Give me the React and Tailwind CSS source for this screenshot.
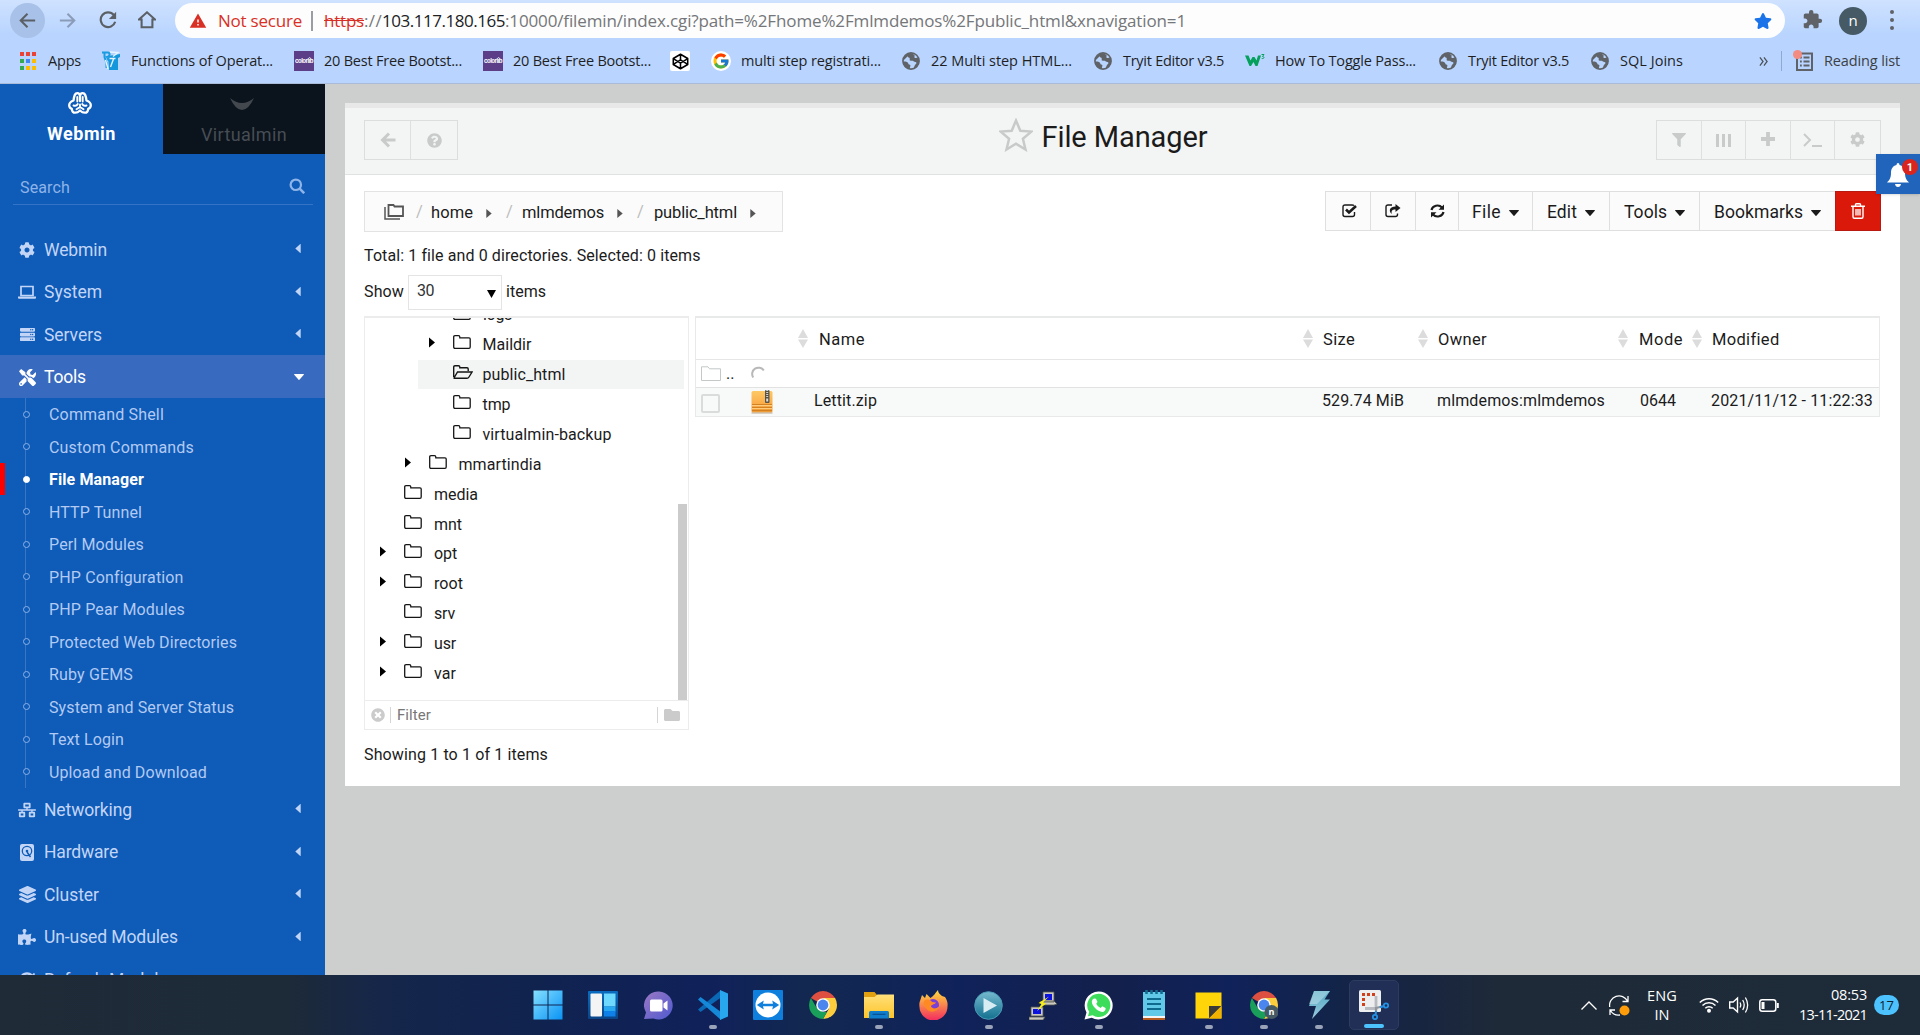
import React, { useLayoutEffect, useRef } from "react";
import {
  FaCog, FaServer, FaTools, FaNetworkWired, FaLayerGroup, FaPuzzlePiece,
  FaFilter, FaSyncAlt, FaQuestionCircle, FaTimesCircle,
  FaFolder, FaStar,
} from "react-icons/fa";
import { MdExtension, MdWarning } from "react-icons/md";
import { FcGoogle } from "react-icons/fc";

/* Text that is tracked so that it fills exactly `w` pixels. */
function Fit({ w, className = "", inner = "", children }) {
  const ref = useRef(null);
  useLayoutEffect(() => {
    const el = ref.current;
    el.style.letterSpacing = "0px";
    const natural = el.getBoundingClientRect().width;
    const n = el.textContent.length;
    el.style.letterSpacing = `${(w - natural) / n}px`;
  }, [w]);
  return (
    <span className={`block shrink-0 whitespace-pre ${className}`} style={{ width: w }}>
      <span ref={ref} className={`inline-block ${inner}`}>{children}</span>
    </span>
  );
}

const Svg = ({ className = "", vb = "0 0 20 20", children }) => (
  <svg viewBox={vb} className={`block shrink-0 ${className}`} fill="none">{children}</svg>
);

const CaretR = ({ className = "" }) => (
  <Svg vb="0 0 6 10" className={className}><path d="M0 0l6 5-6 5z" fill="currentColor" /></Svg>
);
const CaretL = ({ className = "" }) => (
  <Svg vb="0 0 6 10" className={className}><path d="M5.500 0Q6 0 6 .6v8.800q0 .6-.5.6L.3 5.400Q0 5 .3 4.600z" fill="currentColor" /></Svg>
);
const CaretD = ({ className = "" }) => (
  <Svg vb="0 0 10 6" className={className}><path d="M0 .5Q0 0 .6 0h8.800q.6 0 .6.5L5.400 5.700q-.4.4-.8 0z" fill="currentColor" /></Svg>
);

/* ---------- browser ---------- */
const Colorlib = () => (
  <div className="flex h-5 w-5 items-center justify-center overflow-hidden bg-[#5b3e87]">
    <span className="font-['Inter'] text-[6px] font-bold leading-none tracking-[-0.5px] text-white">colorlib</span>
  </div>
);
const GlobeIcon = () => (
  <Svg className="h-[18px] w-[18px]" vb="0 0 20 20">
    <circle cx="10" cy="10" r="9" fill="#b9d5ff" stroke="#5f6368" strokeWidth="1.800" />
    <path d="M10 1a9 9 0 0 0-9 9.500c2 .3 3.500-.2 5 .8s.5 2.200 2 2.500c1.200.2 1.600.9 1.200 1.900L8.500 19C4 18.500 1 15 1 10zM10 1c-2 1.300-3.800 2.300-3.600 4 .2 1.300 1.900.9 2.200 2.200.3 1-.7 1.700.4 2.300 1.400.7 2.600-.2 3.800.7 1.300 1 3 .3 3.200 1.800.2 1.700-1.800 1.900-2 3.300L12.500 19c3.800-1 6.500-4.500 6.500-9 0-1.500-.4-3-1-4.200-1.200.4-2.600 1.400-3.800.6-1.300-.9.600-2-.4-3.200-.7-.9-2.500-1.400-3.800-2.200z" fill="#5f6368" />
  </Svg>
);
const AppsIcon = () => {
  const c = ["#ea4335", "#ea4335", "#ea4335", "#34a853", "#4285f4", "#fbbc04", "#34a853", "#fbbc04", "#fbbc04"];
  return (
    <div className="grid w-4 grid-cols-3 gap-x-[2px] gap-y-[3px]">
      {c.map((k, i) => <i key={i} className="block h-1 w-1" style={{ backgroundColor: k }} />)}
    </div>
  );
};
const RtIcon = () => (
  <Svg className="h-5 w-5" vb="0 0 20 20">
    <path d="M7 5l12-2v3l-2 1v12H8z" fill="#1497db" />
    <path d="M1 1.500h6c2 0 2.500 4-1 4.500l2 4M3.500 2v4l2 6v5" stroke="#1b9be0" strokeWidth="2" />
    <path d="M8.500 7.500h6M12.500 8l-3 8M4.500 9l2.500 9M9 1l8 .5-5 4" stroke="#e6f4ff" strokeWidth="1.400" />
  </Svg>
);
const CodepenIcon = () => (
  <div className="flex h-5 w-5 items-center justify-center rounded-[2px] bg-white">
    <Svg className="h-[17px] w-[17px]" vb="0 0 20 20">
      <path d="M10 1.500L18.500 6.500v7L10 18.500l-8.500-5v-7zM1.500 6.500L10 12l8.500-5.500M1.500 13.500L10 8l8.500 5.500M10 1.500V8M10 12v6.500" stroke="#000" strokeWidth="1.800" strokeLinejoin="round" />
    </Svg>
  </div>
);
const GIcon = () => (
  <div className="flex h-5 w-5 items-center justify-center rounded-full bg-white"><FcGoogle size={18} /></div>
);
const W3Icon = () => (
  <Svg className="h-5 w-5" vb="0 0 20 20">
    <path d="M0 4.500h3.500l2 5 2-3.500h2l2 3.500 1.500-5h3L12.500 15h-2L8.500 11l-2.500 4H4.500z" fill="#04a05c" />
    <path d="M16.500 3.500h2.500L17.500 5.500c2.200 0 2 2.400-.8 2" stroke="#04a05c" strokeWidth="1" />
  </Svg>
);

const bookmarks = [
  [AppsIcon, "Apps", "ml-5 w-4", "ml-3", 33],
  [RtIcon, "Functions of Operat...", "ml-5 w-5", "ml-[10px]", 142],
  [Colorlib, "20 Best Free Bootst...", "ml-[21px] w-5", "ml-[10px]", 138],
  [Colorlib, "20 Best Free Bootst...", "ml-[21px] w-5", "ml-[10px]", 138],
  [CodepenIcon, null, "ml-[19px] w-5", "", 0],
  [GIcon, "multi step registrati...", "ml-[21px] w-5", "ml-[10px]", 140],
  [GlobeIcon, "22 Multi step HTML...", "ml-[21px] w-[18px]", "ml-[11px]", 141],
  [GlobeIcon, "Tryit Editor v3.5", "ml-[22px] w-[18px]", "ml-[11px]", 101],
  [W3Icon, "How To Toggle Pass...", "ml-[21px] w-5", "ml-[10px]", 141],
  [GlobeIcon, "Tryit Editor v3.5", "ml-[23px] w-[18px]", "ml-[11px]", 101],
  [GlobeIcon, "SQL Joins", "ml-[22px] w-[18px]", "ml-[11px]", 63],
];

function Browser() {
  return (
    <header className="h-[84px] shrink-0 border-b border-[#a9bbd8] bg-gradient-to-b from-[#cfe2ff] from-0% to-[#b9d5ff] to-40% font-['Open_Sans',sans-serif] text-[#1f1f1f]">
      <div className="flex h-[38px] items-end">
        <div className="ml-[10px] flex h-[35px] w-[35px] items-center justify-center rounded-full bg-[#a8c1e8]">
          <Svg className="h-[17px] w-[17px]"><path d="M19 10H2M10 2l-8 8 8 8" stroke="#5b6066" strokeWidth="2.400" /></Svg>
        </div>
        <Svg className="mb-[9px] ml-[14px] h-[17px] w-[17px]"><path d="M1 10h17M10 2l8 8-8 8" stroke="#8b9cb8" strokeWidth="2.400" /></Svg>
        <Svg className="mb-[9px] ml-[23px] h-[18px] w-[18px]">
          <path d="M16.500 4.500A8.200 8.200 0 1 0 18 12" stroke="#5b6066" strokeWidth="2.400" />
          <path d="M19 .8v8h-8z" fill="#5b6066" />
        </Svg>
        <Svg className="mb-[9px] ml-[21px] h-[18px] w-[18px]"><path d="M1 9.500L10 1.500l9 8h-3V18H4V9.500z" stroke="#5b6066" strokeWidth="2.300" /></Svg>
        <div className="ml-[19px] flex h-[35px] w-[1610px] items-center rounded-full bg-[#fdfdfd] text-[17px] leading-none text-[#747679]">
          <MdWarning className="ml-[14px] text-[#d93025]" size={18} />
          <Fit w={84} className="ml-[11px] text-[#d93025]">Not secure</Fit>
          <div className="ml-[9px] h-5 w-[2px] bg-[#9a9da1]" />
          <Fit w={40} className="ml-[11px] text-[#d93025]" inner="line-through">https</Fit>
          <Fit w={18} className="">://</Fit>
          <Fit w={123} className="text-[#202124]">103.117.180.165</Fit>
          <Fit w={681}>:10000/filemin/index.cgi?path=%2Fhome%2Fmlmdemos%2Fpublic_html&xnavigation=1</Fit>
          <FaStar className="ml-auto mr-[13px] text-[#1a73e8]" size={18} />
        </div>
        <MdExtension className="mb-[8px] ml-[17px] text-[#5f6368]" size={21} />
        <div className="mb-[3px] ml-[16px] flex h-7 w-7 items-center justify-center rounded-full bg-[#455a64] pb-[2px] text-[15px] text-white">n</div>
        <div className="mb-[8px] ml-[23px] flex flex-col gap-1">
          <i className="block h-1 w-1 rounded-full bg-[#5f6368]" /><i className="block h-1 w-1 rounded-full bg-[#5f6368]" /><i className="block h-1 w-1 rounded-full bg-[#5f6368]" />
        </div>
      </div>
      <div className="flex h-[45px] items-center pt-[1px] text-[14.500px] leading-none">
        {bookmarks.map(([Icon, label, ic, tc, w], i) => (
          <div key={i} className="flex shrink-0 items-center">
            <div className={`shrink-0 ${ic}`}><Icon /></div>
            {label && <Fit w={w} className={tc}>{label}</Fit>}
          </div>
        ))}
        <Svg className="ml-[76px] h-[9px] w-[9px]"><path d="M2 1l7 9-7 9M11 1l7 9-7 9" stroke="#4c5157" strokeWidth="2.800" /></Svg>
        <div className="ml-[13px] h-5 w-px bg-[#8fa9d2]" />
        <Svg className="ml-[11px] h-[22px] w-[21px]" vb="0 0 21 22">
          <path d="M4 3.500h15V20H4z" stroke="#5f6368" strokeWidth="2" />
          <path d="M7 7.500h1.800M7 11.500h1.800M7 15.500h1.800M10.500 7.500H16.500M10.500 11.500h6M10.500 15.500h6" stroke="#5f6368" strokeWidth="1.800" />
          <circle cx="4.500" cy="4.500" r="4.500" fill="#f28b82" />
        </Svg>
        <Fit w={76} className="ml-[10px] text-[#3c4043]">Reading list</Fit>
      </div>
    </header>
  );
}

/* ---------- sidebar ---------- */
const WebminLogo = () => (
  <Svg className="h-[22px] w-[24px]" vb="0 0 24 22">
    <path d="M12 9V4.500C12 2 10.800 1.200 9.300 1.200 7 1.200 6.300 3 5.500 8.500 2.800 9.500 1.200 11 1.200 13.300c0 1.800 1 3 2.600 3.500.2 2.600 1.500 3.900 3.500 3.900 1.800 0 3.200-.8 4.700-2.200 1.500 1.400 2.900 2.200 4.700 2.200 2 0 3.300-1.300 3.500-3.900 1.600-.5 2.600-1.700 2.600-3.500 0-2.300-1.600-3.800-4.300-4.800C17.700 3 17 1.200 14.700 1.200 13.200 1.200 12 2 12 4.500" stroke="#fff" strokeWidth="2.300" strokeLinecap="round" strokeLinejoin="round" />
    <path d="M9.300 5v4.500M14.700 5v4.500M5.500 13.500c2 .6 3.500 0 4.300-1.500M18.500 13.500c-2 .6-3.500 0-4.300-1.500M12 12.500V15M8.500 17.300L12 15l3.500 2.300" stroke="#fff" strokeWidth="1.900" strokeLinecap="round" strokeLinejoin="round" />
  </Svg>
);
const Laptop = () => (
  <Svg className="h-[14px] w-[18px]" vb="0 0 18 14"><path d="M3 1.500h12v9H3z" stroke="currentColor" strokeWidth="1.700" /><path d="M0 11.500h18V13q0 .8-1 .8H1q-1 0-1-.8z" fill="currentColor" /></Svg>
);
const Disk = () => (
  <Svg className="h-[17px] w-[14px]" vb="0 0 14 17"><rect width="14" height="17" rx="2" fill="currentColor" /><circle cx="7" cy="7" r="4.700" stroke="#0e5bb8" strokeWidth="1.300" /><circle cx="7" cy="7" r="1.300" fill="#0e5bb8" /><path d="M7 8l3.500 5M2.500 14h.1" stroke="#0e5bb8" strokeWidth="1.500" /></Svg>
);
const Refresh = () => <FaSyncAlt size={16} />;
const top = [[FaCog, "Webmin", 63, 16], [Laptop, "System", 58, 17], [FaServer, "Servers", 58, 15]];
const bottom = [[FaNetworkWired, "Networking", 88, 18], [Disk, "Hardware", 74, 16], [FaLayerGroup, "Cluster", 55, 17], [FaPuzzlePiece, "Un-used Modules", 134, 18], [Refresh, "Refresh Modules", 133, 16]];
const subs = [
  ["Command Shell", 115], ["Custom Commands", 145], ["File Manager", 95], ["HTTP Tunnel", 93], ["Perl Modules", 95],
  ["PHP Configuration", 134], ["PHP Pear Modules", 136], ["Protected Web Directories", 188], ["Ruby GEMS", 84],
  ["System and Server Status", 185], ["Text Login", 75], ["Upload and Download", 158],
];
const MenuItem = ({ icon: Icon, label, w, size, open, last }) => (
  <div className={`flex h-[42.500px] shrink-0 items-center text-[17.500px] leading-none ${open ? "bg-[#386bbf] text-white" : "text-[#c3d5f6]"}`}>
    <div className="ml-[17px] flex w-5 justify-center pt-[2px]"><Icon size={size} /></div>
    <Fit w={w} className="ml-[7px] pt-[3px]">{label}</Fit>
    {open ? <CaretD className="ml-auto mr-[21px] mt-px h-[6px] w-[10px]" /> : last ? null : <CaretL className="ml-auto mr-[24px] h-[9px] w-[6px]" />}
  </div>
);

function Sidebar() {
  return (
    <aside className="flex w-[325px] shrink-0 flex-col overflow-hidden bg-[#0e5bb8] font-['Roboto',sans-serif]">
      <div className="flex h-[70px] shrink-0 leading-none">
        <div className="flex w-[163px] flex-col items-center pt-2 text-[18px] font-bold text-white">
          <div className="-ml-1"><WebminLogo /></div>
          <Fit w={69} className="mt-[11px]">Webmin</Fit>
        </div>
        <div className="flex w-[162px] flex-col items-center bg-[#0b131c] pt-[14px] text-[18px] text-[#474d54]">
          <Svg className="-ml-1 h-[12px] w-6" vb="0 0 24 12"><path d="M0 0q6 5 12 5T24 0q-5.500 12-12 12T0 0z" fill="#43484f" /></Svg>
          <Fit w={86} className="mt-[16px]">Virtualmin</Fit>
        </div>
      </div>
      <div className="ml-[13px] mr-[12px] flex h-[51px] shrink-0 items-end border-b border-[#3473c5] pb-[8px] text-[16px] leading-none text-[#8eb4e8]">
        <Fit w={50} className="ml-[7px]">Search</Fit>
        <Svg className="mb-[2px] ml-auto mr-[8px] h-4 w-4"><circle cx="8.500" cy="8.500" r="6.500" stroke="currentColor" strokeWidth="2.800" /><path d="M13 13l6 6" stroke="currentColor" strokeWidth="3.200" /></Svg>
      </div>
      <div className="h-[22.500px] shrink-0" />
      {top.map(([icon, label, w, size]) => <MenuItem key={label} icon={icon} label={label} w={w} size={size} />)}
      <MenuItem icon={FaTools} label="Tools" w={42} size={17} open />
      <div className="flex shrink-0 flex-col bg-[linear-gradient(#3b76c6,#3b76c6)] bg-[length:1px_100%] bg-[position:25px_0] bg-no-repeat">
        {subs.map(([label, w]) => {
          const on = label === "File Manager";
          return (
            <div key={label} className={`flex h-[32.500px] items-center text-[16px] leading-none ${on ? "text-white" : "text-[#b3caf2]"}`}>
              <div className={`h-8 w-[5px] ${on ? "bg-[#ff0000]" : ""}`} />
              <div className={`ml-[17.500px] mt-px h-[7px] w-[7px] rounded-full border ${on ? "border-white bg-white" : "border-[#8fb2e6] bg-[#0e5bb8]"}`} />
              <Fit w={w} className={`ml-[19.500px] pt-[3px] ${on ? "font-bold" : ""}`}>{label}</Fit>
            </div>
          );
        })}
      </div>
      {bottom.map(([icon, label, w, size]) => <MenuItem key={label} icon={icon} label={label} w={w} size={size} last={label.startsWith("Refresh")} />)}
    </aside>
  );
}

/* ---------- file manager ---------- */
const FolderIcon = ({ className = "" }) => (
  <Svg className={`h-[14px] w-[18px] ${className}`} vb="0 0 18 14"><path d="M.7 12V2Q.7.7 2 .7h3.500Q6.800.7 6.800 2v.8H16q1.200 0 1.200 1.200v8q0 1.300-1.200 1.300H2Q.7 13.300.7 12z" stroke="currentColor" strokeWidth="1.300" /></Svg>
);
const FolderOpen = () => (
  <Svg className="h-[14px] w-[20px]" vb="0 0 20 14"><path d="M.7 12V2Q.7.7 2 .7h3.500Q6.800.7 6.800 2v.8H14q1.200 0 1.200 1.200v2M1 13l3.500-6H19l-3 5q-.8 1.300-2 1.300H1.500z" stroke="currentColor" strokeWidth="1.400" /></Svg>
);
const tree = [
  ["Maildir", "pl-[61px]", true, 49], ["public_html", "pl-[61px]", false, 83], ["tmp", "pl-[61px]", false, 28], ["virtualmin-backup", "pl-[61px]", false, 129],
  ["mmartindia", "pl-[37px]", true, 83], ["media", "pl-[12.500px]", false, 44], ["mnt", "pl-[12.500px]", false, 28], ["opt", "pl-[12.500px]", true, 23],
  ["root", "pl-[12.500px]", true, 29], ["srv", "pl-[12.500px]", false, 21], ["usr", "pl-[12.500px]", true, 22], ["var", "pl-[12.500px]", true, 22],
];
const Sort = () => (
  <Svg className="h-[19px] w-[10px]" vb="0 0 10 19"><path d="M5 0l5 9H0zM5 19l5-8.500H0z" fill="#dcdcdc" /></Svg>
);
const CheckBoxIcon = () => (
  <Svg className="h-[14px] w-[16px]" vb="0 0 16 14"><path d="M12 1.700Q11.500 1 10 1H3Q1 1 1 3v7.500q0 2 2 2h7.500q2 0 2-2V8" stroke="currentColor" strokeWidth="1.400" /><path d="M4 5.500l3 3 7-6.500" stroke="currentColor" strokeWidth="2.600" /></Svg>
);
const ShareIcon = () => (
  <Svg className="h-[14px] w-[16px]" vb="0 0 16 14"><path d="M7 1H3Q1 1 1 3v7.500q0 2 2 2h7.500q2 0 2-2V9.500" stroke="currentColor" strokeWidth="1.400" /><path d="M10.500 0L15.500 4l-5 4V5.500C7.500 5.400 6 6.500 6.800 10 3 6.500 5 2.600 10.500 2.400z" fill="currentColor" /></Svg>
);
const SyncIcon = () => (
  <Svg className="h-[14px] w-[15px]" vb="0 0 15 14"><path d="M1.500 6a6 5.500 0 0 1 10.500-2.500M13.500 8A6 5.500 0 0 1 3 10.500" stroke="currentColor" strokeWidth="2.200" /><path d="M14 .5v5.300H8.500zM1 13.500V8.200h5.500z" fill="currentColor" /></Svg>
);
const TrashIcon = () => (
  <Svg className="h-[16px] w-[14px]" vb="0 0 14 16"><path d="M0 3.300h14M4.500 3V1.500q0-.8.8-.8h3.400q.8 0 .8.800V3M2 3.500v10.200q0 1.500 1.300 1.500h7.400q1.300 0 1.300-1.500V3.500M5 6v6.500M7 6v6.500M9 6v6.500" stroke="#fff" strokeWidth="1.400" /></Svg>
);
const ZipIcon = () => (
  <Svg className="h-[24px] w-[22px]" vb="0 0 22 24">
    <defs><linearGradient id="zip" x1="0" y1="0" x2="0" y2="1"><stop offset="0" stopColor="#fdc965" /><stop offset=".6" stopColor="#fbac48" /><stop offset="1" stopColor="#ec9a35" /></linearGradient></defs>
    <rect x=".5" y="1" width="21" height="21.500" rx="1.500" fill="url(#zip)" />
    <path d="M1 14.500h20M1 17.500h20M1 20.500h20" stroke="#cf7d20" strokeWidth=".9" />
    <path d="M1 15.500h20M1 18.500h20" stroke="#ffd58b" strokeWidth=".8" />
    <rect x="14" y="0" width="4.500" height="13" rx="1" fill="#55534e" />
    <path d="M16.200 0v8" stroke="#d4d4d4" strokeWidth="2" strokeDasharray="1 1" /><rect x="15.200" y="8.500" width="2" height="3" fill="#ddd" />
    <rect x=".5" y="22.500" width="21" height="1" fill="#b9a78d" />
  </Svg>
);
const cellBtn = "flex h-full items-center justify-center border-l border-[#dedfdf] first:border-l-0";

function Tree() {
  return (
    <div className="w-[325px] shrink-0 border border-t-2 border-[#ececec]">
      <div className="flex h-[383px] flex-col overflow-hidden border-b border-[#ececec]">
        <div className="flex items-start">
          <div className="-mr-[6px] flex-1">
            <div className="flex h-[11px] items-end overflow-hidden pl-[88px]">
              <FolderIcon className="mb-[9px]" />
              <Fit w={29} className="ml-[12px] mb-[6px] text-[16px] leading-none">logs</Fit>
            </div>
            {tree.map(([name, pad, arrow, w]) => {
              const sel = name === "public_html";
              return (
                <div key={name} className={`flex h-[29.860px] items-center ${pad} ${sel ? "bg-[linear-gradient(#f3f5f5,#f3f5f5)] bg-[length:100%_29px] bg-[position:53px_1px] bg-no-repeat" : ""}`}>
                  <div className="w-[26.500px] pb-[2px] pl-[2.500px]">{arrow && <CaretR className="h-[11px] w-[6px] text-black" />}</div>
                  <div className="w-5 pb-[3px] text-[#151515]">{sel ? <FolderOpen /> : <FolderIcon />}</div>
                  <Fit w={w} className="ml-[10px] pt-[3px] text-[16px] leading-none">{name}</Fit>
                </div>
              );
            })}
          </div>
          <div className="mr-[1px] mt-[186px] h-[196px] w-[9px] bg-[#cbcbcb]" />
        </div>
      </div>
      <div className="flex h-[27.500px] items-center text-[15px] leading-none text-[#777]">
        <FaTimesCircle className="ml-[6px] text-[#cbcbcb]" size={14} />
        <div className="ml-[5px] h-4 w-px bg-[#d5d5d5]" />
        <Fit w={34} className="ml-[6px] pt-[2px]">Filter</Fit>
        <div className="ml-auto h-4 w-px bg-[#d5d5d5]" />
        <FaFolder className="ml-[6px] mr-[8px] text-[#cbcbcb]" size={16} />
      </div>
    </div>
  );
}

function FileTable() {
  return (
    <div className="h-[101px] w-[1185px] border border-t-2 border-[#e8eaea] text-[16px] leading-none">
      <div className="flex h-[42px] items-center border-b border-[#e6e6e6] text-[16.500px]">
        <div className="ml-[102px]"><Sort /></div><Fit w={46} className="ml-[11px] pt-[3px]">Name</Fit>
        <div className="ml-[438px]"><Sort /></div><Fit w={32} className="ml-[10px] pt-[3px]">Size</Fit>
        <div className="ml-[63px]"><Sort /></div><Fit w={49} className="ml-[10px] pt-[3px]">Owner</Fit>
        <div className="ml-[131px]"><Sort /></div><Fit w={44} className="ml-[11px] pt-[3px]">Mode</Fit>
        <div className="ml-[9px]"><Sort /></div><Fit w={67} className="ml-[10px] pt-[3px]">Modified</Fit>
      </div>
      <div className="flex h-[28px] items-center border-b border-[#e2e2e2]">
        <Svg className="ml-[5px] h-[15px] w-[20px]" vb="0 0 20 15"><path d="M.5 14.500V.8H7l1.500 2H19.500v11.700z" stroke="#c4c8c8" /></Svg>
        <span className="ml-[5px] w-[24px]">..</span>
        <Svg className="mb-[3px] h-[14px] w-[15px]" vb="0 0 15 14"><path d="M3.200 12.500A6.300 6.300 0 0 1 13.800 5.500" stroke="#b8b8b8" strokeWidth="2" /></Svg>
      </div>
      <div className="flex h-[28px] items-center bg-[#f8fafa]">
        <div className="ml-[5px] mt-[2px] h-[19px] w-[19px] rounded-[2px] border-2 border-[#dadcdc]" />
        <div className="ml-[31px] mb-px"><ZipIcon /></div>
        <Fit w={63} className="ml-[41px] pb-[3px]">Lettit.zip</Fit>
        <Fit w={82} className="ml-[445px] pb-[3px]">529.74 MiB</Fit>
        <Fit w={168} className="ml-[33px] pb-[3px]">mlmdemos:mlmdemos</Fit>
        <Fit w={36} className="ml-[35px] pb-[3px]">0644</Fit>
        <Fit w={162} className="ml-[35px] pb-[3px]">2021/11/12 - 11:22:33</Fit>
      </div>
    </div>
  );
}

const Menu = ({ label, w, box }) => (
  <div className={`${cellBtn} ${box} gap-2 text-[17.500px]`}><Fit w={w} className="pt-[3px]">{label}</Fit><CaretD className="mt-[3px] h-[6px] w-[10px]" /></div>
);

function Main() {
  return (
    <main className="relative flex-1 bg-[#cdcfce] pl-5 pt-[19px] font-['Roboto',sans-serif] leading-none text-[#1b1b1b]">
      <section className="h-[683px] w-[1555px] border-t-[5px] border-[#e8e8e8] bg-white">
        <div className="flex h-[67px] items-start justify-between border-b border-[#e0e2e2] bg-[#f3f5f5] pl-[19px] pr-[19px] pt-3">
          <div className="flex h-10 w-[94px] border border-[#dcdede] text-[#c9cbcb]">
            <div className={`${cellBtn} w-[45px]`}><Svg className="h-[16px] w-[16px]" vb="0 0 16 16"><path d="M15.500 8H3M9 1.500L2.500 8 9 14.500" stroke="currentColor" strokeWidth="3" /></Svg></div>
            <div className={`${cellBtn} w-[47px]`}><FaQuestionCircle size={15} /></div>
          </div>
          <div className="ml-[92px] flex items-center gap-[9px]">
            <Svg className="-mt-[3px] h-[34px] w-[34px]" vb="0 0 34 34"><path d="M17 2.500l4.300 10.200 11 .9-8.400 7.200 2.600 10.700L17 25.800l-9.500 5.700 2.600-10.700L1.700 13.600l11-.9z" stroke="#c8caca" strokeWidth="2.500" /></Svg>
            <Fit w={166} className="mt-[3px] text-[29px]">File Manager</Fit>
          </div>
          <div className="flex h-10 w-[225px] border border-[#dcdede] text-[#c9cbcb]">
            <div className={`${cellBtn} w-[44px]`}><FaFilter size={14} /></div>
            <div className={`${cellBtn} w-[44px] gap-[3px]`}><i className="block h-[13px] w-[3px] bg-[#c9cbcb]" /><i className="block h-[13px] w-[3px] bg-[#c9cbcb]" /><i className="block h-[13px] w-[3px] bg-[#c9cbcb]" /></div>
            <div className={`${cellBtn} w-[45px] pb-[2px]`}><Svg className="h-[14px] w-[14px]" vb="0 0 14 14"><path d="M7 0v14M0 7h14" stroke="currentColor" strokeWidth="3.800" /></Svg></div>
            <div className={`${cellBtn} w-[44px]`}><Svg className="h-[14px] w-[19px]" vb="0 0 19 14"><path d="M1 1l6 6-6 6M9 13h10" stroke="currentColor" strokeWidth="2" /></Svg></div>
            <div className={`${cellBtn} w-[46px] pb-[2px]`}><FaCog size={15} /></div>
          </div>
        </div>
        <div className="flex items-start justify-between pl-[19px] pr-[19px] pt-4">
          <div className="flex h-[41px] w-[419px] items-center border border-[#e2e4e4] bg-[#fbfbfb] text-[16.500px]">
            <Svg className="ml-[19px] h-[16px] w-[20px] text-[#555]" vb="0 0 20 16"><path d="M4.500 1h5l1 1.500H19V12H4.500z" stroke="currentColor" strokeWidth="1.800" /><path d="M1 3v12h15" stroke="currentColor" strokeWidth="1.500" /></Svg>
            <span className="ml-[12px] w-[6px] pt-[2px] text-[#bdbdbd]">/</span><Fit w={42} className="ml-[9px] pt-[3px]">home</Fit><CaretR className="ml-[13px] mt-[3px] h-[9px] w-[6px] text-[#555]" />
            <span className="ml-[14px] w-[6px] pt-[2px] text-[#bdbdbd]">/</span><Fit w={82} className="ml-[10px] pt-[3px]">mlmdemos</Fit><CaretR className="ml-[13px] mt-[3px] h-[9px] w-[6px] text-[#555]" />
            <span className="ml-[14px] w-[6px] pt-[2px] text-[#bdbdbd]">/</span><Fit w={83} className="ml-[11px] pt-[3px]">public_html</Fit><CaretR className="ml-[13px] mt-[3px] h-[9px] w-[6px] text-[#555]" />
          </div>
          <div className="flex h-10 w-[556px] bg-[#fbfbfb]">
            <div className="flex flex-1 border border-r-0 border-[#dedfdf]">
              <div className={`${cellBtn} w-[44px] pl-1`}><CheckBoxIcon /></div>
              <div className={`${cellBtn} w-[45px]`}><ShareIcon /></div>
              <div className={`${cellBtn} w-[43px]`}><SyncIcon /></div>
              <Menu label="File" w={29} box="w-[74px]" />
              <Menu label="Edit" w={30} box="w-[77px]" />
              <Menu label="Tools" w={43} box="w-[90px]" />
              <Menu label="Bookmarks" w={89} box="flex-1" />
            </div>
            <div className="flex w-[46px] items-center justify-center border border-[#b81a12] bg-[#da190b]"><TrashIcon /></div>
          </div>
        </div>
        <div className="flex flex-col pl-[19px]">
          <Fit w={336} className="mt-[16px] text-[16px]">Total: 1 file and 0 directories. Selected: 0 items</Fit>
          <div className="mt-[11px] flex h-[35px] items-center text-[16px]">
            <Fit w={40} className="pb-px">Show</Fit>
            <div className="ml-1 flex h-full w-[94px] items-center border border-[#e4e4e4] text-[#333]">
              <Fit w={17} className="ml-2 pb-[3px]">30</Fit>
              <Svg className="ml-auto mr-[5px] mt-[3px] h-[8px] w-[9px]" vb="0 0 9 8"><path d="M0 0h9L4.500 8z" fill="#000" /></Svg>
            </div>
            <Fit w={40} className="ml-1 pb-px">items</Fit>
          </div>
          <div className="mt-[6px] flex items-start gap-[6px]"><Tree /><FileTable /></div>
          <Fit w={184} className="mt-[17.500px] text-[16px]">Showing 1 to 1 of 1 items</Fit>
        </div>
      </section>
      <div className="absolute right-0 top-[70px] flex h-10 w-11 items-center justify-center bg-[#2164bb] shadow">
        <Svg className="mt-[2px] h-[24px] w-[22px]" vb="0 0 22 24"><path d="M11 0q1.500 0 1.500 2c4 1 5.500 4 5.500 8 0 5 1.500 7 4 9.500H0C2.500 17 4 15 4 10c0-4 1.500-7 5.500-8Q9.500 0 11 0zM8 21h6q-.5 3-3 3t-3-3z" fill="#fff" /></Svg>
        <div className="absolute right-[2px] top-[5px] flex h-4 w-4 items-center justify-center rounded-full bg-[#d9251d] text-[11px] font-bold text-white">1</div>
      </div>
    </main>
  );
}

/* ---------- taskbar ---------- */
const Chrome = ({ badge }) => (
  <Svg className="h-[28px] w-[28px]" vb="0 0 28 28">
    <path d="M14 14L1.900 7A14 14 0 0 1 26.100 7H14z" fill="#dd4f40" />
    <path d="M14 7H26.100A14 14 0 0 1 28 14a14 14 0 0 1-14 14l6-10.500z" fill="#fccd3d" />
    <path d="M14 28A14 14 0 0 1 1.900 7L8 17.500l6 3.500h4z" fill="#1a9f5a" />
    <circle cx="14" cy="14" r="6.800" fill="#fff" /><circle cx="14" cy="14" r="5.400" fill="#4a86ee" />
    {badge && <><circle cx="21.500" cy="21" r="7" fill="#455a64" /><text x="21.500" y="24.200" textAnchor="middle" fontSize="9" fontWeight="700" fontFamily="Open Sans" fill="#fff">n</text></>}
  </Svg>
);
const g = (id, a, b, diag) => (
  <linearGradient id={id} x1="0" y1="0" x2={diag ? "1" : "0"} y2="1"><stop stopColor={a} /><stop offset="1" stopColor={b} /></linearGradient>
);
const icons = [
  [<Svg key="w" className="h-[30px] w-[30px]" vb="0 0 30 30"><defs>{g("win", "#84e0ff", "#0a93f5", true)}</defs><path d="M.5.500h14v14H.5zM15.500.500h14v14h-14zM.5 15.500h14v14H.5zM15.500 15.500h14v14h-14z" fill="url(#win)" /></Svg>, 0],
  [<Svg key="d" className="h-[28px] w-[30px]" vb="0 0 30 28"><defs>{g("wid", "#0a6cc0", "#0b4487")}</defs><rect width="30" height="28" rx="1" fill="url(#wid)" /><rect x="2.500" y="2.500" width="11.500" height="23" rx="1" fill="#f4f4f4" /><rect x="16" y="2.500" width="11.500" height="13" fill="#6fd8ff" /><rect x="16" y="15.500" width="11.500" height="5" fill="#28a8f0" /><rect x="16" y="20" width="11.500" height="5.500" fill="#0f80e8" /></Svg>, 0],
  [<Svg key="m" className="h-[29px] w-[29px]" vb="0 0 29 29"><defs>{g("meet", "#9a78c4", "#4f5ad0", true)}</defs><path d="M15 .5a14 14 0 1 1-5.500 27L0 28l2-6.500A14 14 0 0 1 15 .5z" fill="url(#meet)" /><rect x="6" y="8.500" width="12.500" height="12" rx="1.500" fill="#fff" /><path d="M19.500 12.500l4-3v10l-4-3z" fill="#fff" /></Svg>, 0],
  [<Svg key="v" className="h-[30px] w-[30px]" vb="0 0 30 30"><path d="M0 19.500l2.500 2.500L23 7.500V0z" fill="#0a68b4" /><path d="M0 9.500L2.500 7 23 22v8z" fill="#1688d8" /><path d="M22 0l8 3.500v23L22 30z" fill="#28a7ee" /></Svg>, 1],
  [<Svg key="t" className="h-[30px] w-[30px]" vb="0 0 30 30"><rect width="30" height="30" rx="1" fill="#0e7fdc" /><circle cx="15" cy="15" r="12.500" fill="#fff" /><path d="M3.800 15l7-4.500-.8 3.200h10l-.8-3.200 7 4.500-7 4.500.8-3.200H10l.8 3.200z" fill="#0e7fdc" /></Svg>, 0],
  [<Chrome key="c" />, 0],
  [<Svg key="f" className="h-[28px] w-[30px]" vb="0 0 30 28"><defs>{g("fold", "#ffe07a", "#fdc42a")}</defs><path d="M0 1h10.500l2.500 3H28v6H0z" fill="#e0a010" /><path d="M0 6h10.500L13.500 3.500H30V27H0z" fill="url(#fold)" /><path d="M5 27.500v-6Q5 20 6.500 20h17q1.500 0 1.500 1.500v6z" fill="#0f7ccc" /><path d="M8.500 23.300h13" stroke="#0a4f8f" strokeWidth="1.200" /></Svg>, 1],
  [<Svg key="x" className="h-[30px] w-[29px]" vb="0 0 29 30"><defs>{g("fire", "#ffdc3c", "#f32c5f")}</defs><path d="M1 11l2-6 3 3 1.500-4 4 4C15 6 16 3 19 0c0 3 2 4 4 6l3 1c2 3 3 6 2.500 9A14 14 0 0 1 .5 17Q0 13 1 11z" fill="url(#fire)" /><circle cx="14" cy="15" r="6" fill="#7a3fd6" /><path d="M5 11c3-3 7-1 8 1l4 .5c-1 2-5 2-5 4 1 2 5 3 8 0-1 5-8 7-12 3-3-3-4-6-3-8.500z" fill="#ff8a24" /></Svg>, 0],
  [<Svg key="p" className="h-[29px] w-[29px]" vb="0 0 29 29"><defs>{g("play", "#76b9cf", "#11708f")}</defs><circle cx="14.500" cy="14.500" r="13.800" fill="url(#play)" stroke="#4b9ab5" /><path d="M9.500 7L23 14.500 9.500 22z" fill="#d8ecf3" /></Svg>, 1],
  [<Svg key="u" className="h-[29px] w-[29px]" vb="0 0 29 29"><path d="M14 1h11v10H14zM11 11l3-1h11l3 3-3 1H13zM2 16h12v9H2zM0 26h16l-2 3H0z" fill="#c9c9c2" stroke="#55554d" strokeWidth=".8" /><path d="M16 3h7v6h-7zM4 18h8v5H4z" fill="#0c12e0" /><path d="M20 5.500l-6 6 3 1-9 7.500 4.500-7-3-1z" fill="#f7ee18" /></Svg>, 0],
  [<Svg key="a" className="h-[29px] w-[29px]" vb="0 0 29 29"><path d="M14.500.5a14 14 0 1 1-6.700 26.200L.5 28.500l2-7A14 14 0 0 1 14.500.5z" fill="#fff" /><path d="M14.700 2.800a11.600 11.600 0 1 1-6 21.500L4 25.200l1.200-4.400A11.600 11.600 0 0 1 14.700 2.800z" fill="#3ddc5b" /><path d="M10 7.500l2 .2 1.500 3.300-1.300 1.800c1 2 2.400 3.200 4.300 4.100l1.800-1.700 3.300 1.700c.3 2-1.200 4-3.400 4C13.500 20.500 8 15 7.800 11c0-1.700 1-3.200 2.200-3.500z" fill="#fff" /></Svg>, 1],
  [<Svg key="n" className="h-[30px] w-[22px]" vb="0 0 22 30"><rect y="2" width="22" height="25" fill="#62c8e8" /><path d="M0 26h22v2H0z" fill="#f4f4f4" /><path d="M0 28h22v2H0z" fill="#b75a1e" /><path d="M4 9h14M4 14h14M4 19h14" stroke="#0e6b8f" strokeWidth="1.800" /><path d="M3.500 0v4M8.500 0v4M13.500 0v4M18.500 0v4" stroke="#126d90" strokeWidth="2.500" /></Svg>, 0],
  [<Svg key="s" className="h-[27px] w-[27px]" vb="0 0 27 27"><path d="M.5.500h26v26H.5z" fill="#ffd50a" /><path d="M14 14h12.500L14 26.500z" fill="#3d3b38" /><path d="M26.500 14v12.500H14z" fill="#f2b200" /></Svg>, 1],
  [<Chrome key="cc" badge />, 1],
  [<Svg key="b" className="h-[29px] w-[23px]" vb="0 0 23 29"><defs>{g("bolt", "#4fa9c4", "#9cc9dd")}</defs><path d="M6 0h16l-5.500 8.500H22L4 28l4-13H1z" fill="url(#bolt)" /><path d="M6 0h16L9 13H1z" fill="#c4e2ec" opacity=".5" /></Svg>, 1],
  [<Svg key="z" className="h-[30px] w-[30px]" vb="0 0 30 30"><rect width="22" height="22" rx="1.500" fill="#eceef0" /><path d="M3 3h3v3H3zM8 3h3v3H8zM13 3h3v3h-3zM3 8h3v3H3zM3 13h3v3H3z" fill="#d1401a" /><path d="M17 6v12.500H6" stroke="#b8bbc0" strokeWidth="2.800" /><path d="M17 17v5M17 18l6-1.500" stroke="#8f959c" strokeWidth="2.200" /><circle cx="16" cy="27" r="2.200" stroke="#2492e4" strokeWidth="1.800" /><circle cx="27" cy="15.500" r="2.200" stroke="#2492e4" strokeWidth="1.800" /><path d="M16.500 25l.6-4M25 16l-4 1.300" stroke="#2492e4" strokeWidth="2" /></Svg>, 2],
];

function Taskbar() {
  return (
    <footer className="flex h-[60px] shrink-0 bg-[linear-gradient(90deg,#1f2b37_0%,#1d2a38_15%,#15264a_20%,#10234f_28%,#10215a_37%,#122850_42%,#10225a_50%,#13204c_58%,#10225a_64%,#132448_70%,#182540_74%,#1e2a38_78%,#1e2b39_100%)] font-['Open_Sans',sans-serif] text-white">
      <div className="ml-[520.500px] flex">
        {icons.map(([icon, state], i) => (
          <div key={i} className="flex w-[55.080px] justify-center pt-[5px]">
            <div className={`relative flex h-[50px] w-[50px] items-center justify-center rounded-[5px] ${state === 2 ? "border border-[#2c3b60] bg-[#212e56]" : ""}`}>
              {icon}
              {state > 0 && <div className={`absolute bottom-[1px] h-1 rounded-full ${state === 2 ? "w-5 bg-[#4cc2ff]" : "w-2 bg-[#9aa3b8]"}`} />}
            </div>
          </div>
        ))}
      </div>
      <div className="ml-auto flex h-[60px] items-center pr-[21px] text-[14.500px] leading-none">
        <Svg className="h-[9px] w-4" vb="0 0 16 9"><path d="M.5 8.500l7.500-7.500 7.500 7.500" stroke="#fff" strokeWidth="1.300" /></Svg>
        <Svg className="ml-3 h-[21px] w-[21px]" vb="0 0 21 21"><path d="M.7 12A9.500 9.500 0 0 1 18.500 6M19 1v5.500h-5.500M1 20v-5h5M1.500 15.500A9.500 9.500 0 0 0 11 20" stroke="#fff" strokeWidth="1.300" /><circle cx="15.500" cy="15.500" r="5" fill="#ff9c0a" /></Svg>
        <div className="ml-[17px] flex w-[30px] flex-col items-center gap-[5px] pt-px"><Fit w={30}>ENG</Fit><Fit w={15}>IN</Fit></div>
        <Svg className="ml-[22px] h-[16px] w-5" vb="0 0 20 16"><path d="M.8 5.500a13 13 0 0 1 18.400 0M3.500 8.500a9.200 9.200 0 0 1 13 0M6.300 11.300a5.300 5.300 0 0 1 7.400 0" stroke="#fff" strokeWidth="1.500" /><circle cx="10" cy="13.800" r="2" fill="#fff" /></Svg>
        <Svg className="ml-[10px] h-[18px] w-5" vb="0 0 20 18"><path d="M.7 6h3.500L8.500 2v14L4.200 12H.7z" stroke="#fff" strokeWidth="1.400" /><path d="M11 6.500q1.500 2.500 0 5M13.700 4q3 5 0 10M16.400 1.500q4.500 7.500 0 15" stroke="#fff" strokeWidth="1.300" /></Svg>
        <Svg className="ml-[10px] h-[13px] w-5" vb="0 0 20 13"><rect x=".8" y=".8" width="16" height="11.400" rx="2.500" stroke="#fff" strokeWidth="1.500" /><rect x="2.500" y="3" width="3" height="7" fill="#fff" /><path d="M18.800 4v5" stroke="#fff" strokeWidth="2" /></Svg>
        <div className="ml-5 flex w-[68px] flex-col items-end gap-[5px]"><Fit w={36}>08:53</Fit><Fit w={68}>13-11-2021</Fit></div>
        <div className="ml-[7px] flex h-5 w-[25px] items-center justify-center rounded-full bg-[#4cc2ff] text-[13px] text-[#10202c]">17</div>
      </div>
    </footer>
  );
}

export default function App() {
  return (
    <div className="flex h-[1035px] w-[1920px] flex-col overflow-hidden">
      <Browser />
      <div className="flex h-[891px] shrink-0 overflow-hidden"><Sidebar /><Main /></div>
      <Taskbar />
    </div>
  );
}
